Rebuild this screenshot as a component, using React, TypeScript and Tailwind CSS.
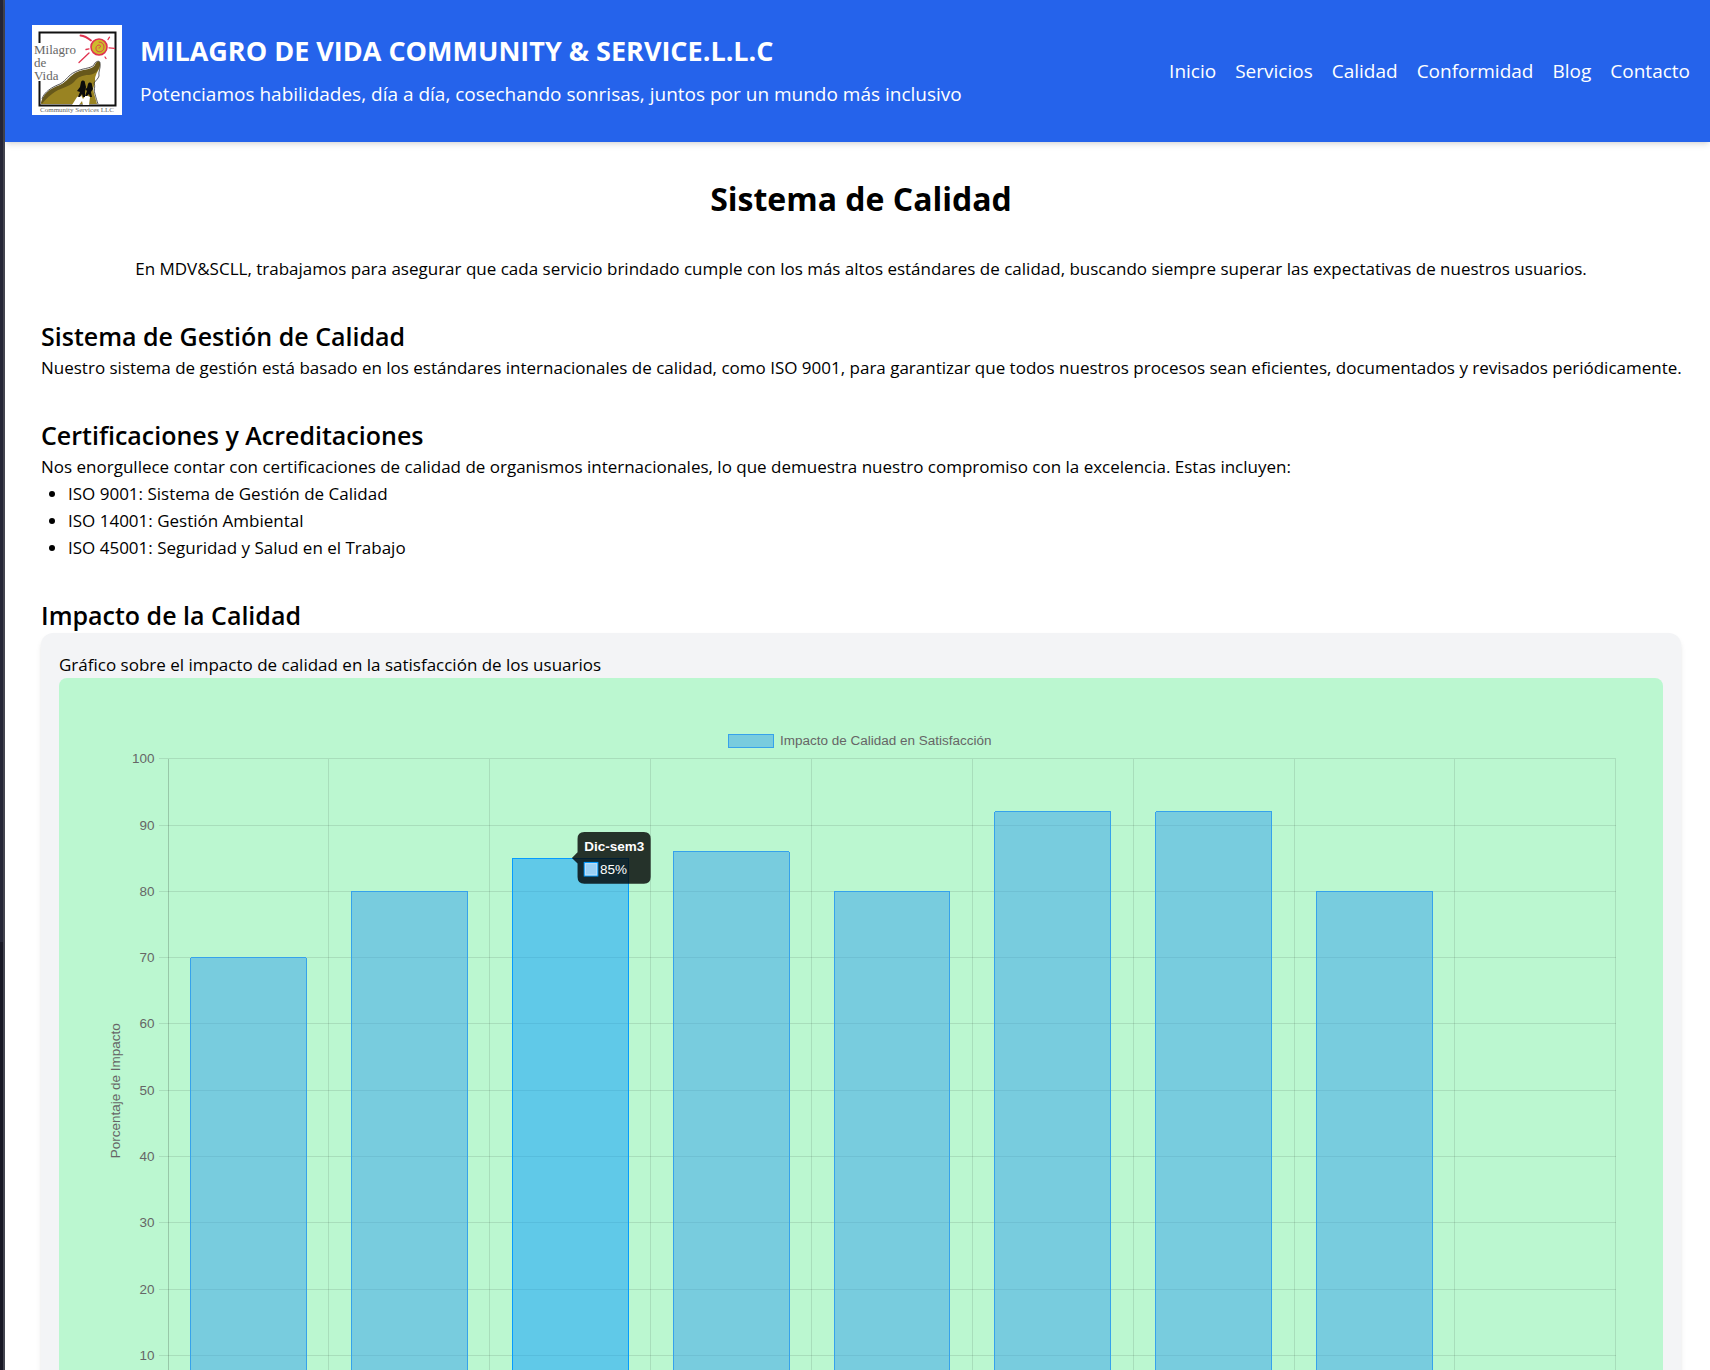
const NAV = ["Inicio", "Servicios", "Calidad", "Conformidad", "Blog", "Contacto"];

const VALUES = [70, 80, 85, 86, 80, 92, 92, 80, 0];
const TICKS = [10, 20, 30, 40, 50, 60, 70, 80, 90, 100];
const ACTIVE = 2;

const LEFT = 97;
const TOP = 72;
const BOTTOM = 661;
const STEP_X = 143;
const RIGHT = LEFT + STEP_X * VALUES.length;
const BAR = 103;

const yOf = (value: number) => BOTTOM - (value / 100) * (BOTTOM - TOP);

function Logo() {
  return (
    <svg viewBox="0 0 90 90" className="size-[90px] shrink-0 bg-white" role="img" aria-label="Milagro de Vida">
      <path d="M7.5 18V7.500H83.500V80.500H7.500V56" fill="none" stroke="#111" strokeWidth="2" />
      <path
        d="M9 79C11 70 18 64 29 60C36 57 38 52 45 48C52 45 60 46 63 41C64 37 67 35 68 38C69 43 65 46 64 50C62 54 64 57 62 61C60 65 63 70 65 79Z"
        fill="#998322"
      />
      <path
        d="M9 78C11 69 17 64 28 60C36 56 37 51 45 47C52 44 60 45 63 40C64 36 68 35 68 39C67 45 64 49 57 50C50 50 46 52 42 57C37 62 27 63 20 69C15 73 12 76 10 79Z"
        fill="#67581b"
      />
      <path
        d="M10 74C12 67 20 62 28 59C35 55 36 50 43 47C50 43 58 44 62 40C63 36 68 35 68 38C69 43 66 47 67 51C66 54 64 55 62 58C64 62 61 65 63 69C64 73 65 76 66 79"
        fill="none"
        stroke="#333"
        strokeWidth="0.8"
      />
      <path d="M45 72L49 70L51 74L54 70L58 72L57 80H51L50 76L47 80H40Z" fill="#fff" />
      <path
        d="M49 57C50 55 53 55 53 58L54 62L53 67L53 72L51 72L50 69L48 72H46L48 67L45 66L48 62Z"
        fill="#0b0b0b"
      />
      <path
        d="M56 59C57 57 60 57 60 60L61 64L59 67L60 72L58 72L57 69L55 71L53 71L55 66L53 64L55 63Z"
        fill="#0b0b0b"
      />
      <g stroke="#e0324f" fill="none" strokeLinecap="round">
        <path d="M57 28L47 37.500M73 32L74 33.500M77 22.800L82.500 23.400M76 14.500L77.500 12.200M54 24.500L57 23.800" strokeWidth="1.300" />
        <path d="M48.500 10.500C53 11 56 13 59 15.500" strokeWidth="1.800" />
        <circle cx="67" cy="22" r="8" fill="#cdbb2c" strokeWidth="1.600" />
        <path d="M67 23C69 23 69 20 67 20C64 20 63 24 65 26C68 28 72 26 72 22C72 19 70 17 67 17" strokeWidth="0.900" />
      </g>
      <g fill="#666" className="font-['Liberation_Serif',serif]">
        <text x="2" y="29" fontSize="13">Milagro</text>
        <text x="2" y="42" fontSize="13">de</text>
        <text x="2" y="55" fontSize="13">Vida</text>
        <text x="45" y="87" fontSize="7" textAnchor="middle">Community Services LLC</text>
      </g>
    </svg>
  );
}

function ImpactChart() {
  return (
    <svg
      viewBox="0 0 1426 713"
      className="block w-full font-['Liberation_Sans',Arial,sans-serif] text-[12px]"
      role="img"
      aria-label="Impacto de Calidad en Satisfacción"
    >
      <g stroke="#000" strokeOpacity="0.1" shapeRendering="crispEdges">
        {[0, ...TICKS].map((t) => (
          <line key={t} x1={LEFT - 8} x2={RIGHT} y1={yOf(t)} y2={yOf(t)} vectorEffect="non-scaling-stroke" />
        ))}
        {[...VALUES, 0].map((_, i) => (
          <line
            key={i}
            x1={LEFT + i * STEP_X}
            x2={LEFT + i * STEP_X}
            y1={TOP}
            y2={BOTTOM + 8}
            vectorEffect="non-scaling-stroke"
          />
        ))}
        <line x1={LEFT} x2={LEFT} y1={TOP} y2={BOTTOM} vectorEffect="non-scaling-stroke" />
      </g>

      <g shapeRendering="crispEdges">
        {VALUES.map((value, i) => {
          if (value === 0) return null;
          const x = LEFT + (i + 0.5) * STEP_X - BAR / 2;
          const y = yOf(value);
          const color = i === ACTIVE ? "#059bff" : "#36a2eb";
          return (
            <g key={i}>
              <rect x={x} y={y} width={BAR} height={BOTTOM - y} fill={color} fillOpacity="0.5" />
              <path
                d={`M${x} ${BOTTOM}V${y}H${x + BAR}V${BOTTOM}`}
                fill="none"
                stroke={color}
                vectorEffect="non-scaling-stroke"
              />
            </g>
          );
        })}
        <rect
          x="595"
          y="50"
          width="40"
          height="12"
          fill="#36a2eb"
          fillOpacity="0.5"
          stroke="#36a2eb"
          vectorEffect="non-scaling-stroke"
        />
      </g>

      <g fill="#666">
        <text x="641" y="60">
          Impacto de Calidad en Satisfacción
        </text>
        {TICKS.map((t) => (
          <text key={t} x={LEFT - 12} y={yOf(t) + 4} textAnchor="end">
            {t}
          </text>
        ))}
        <text transform="translate(54 367) rotate(-90)" textAnchor="middle">
          Porcentaje de Impacto
        </text>
      </g>

      <path
        d="M467 137H520Q526 137 526 143V177Q526 183 520 183H467Q461 183 461 177V165L456 160L461 155V143Q461 137 467 137Z"
        fill="#000"
        fillOpacity="0.8"
      />
      <text x="467" y="154" fill="#fff" className="font-bold">
        Dic-sem3
      </text>
      <rect x="467" y="164" width="12" height="12" fill="#9bd0f5" stroke="#059bff" />
      <rect x="468" y="165" width="10" height="10" fill="#9bd0f5" stroke="#b9defa" />
      <text x="481" y="174" fill="#fff">
        {`${VALUES[ACTIVE]}%`}
      </text>
    </svg>
  );
}

export default function App() {
  return (
    <div className="flex h-screen overflow-hidden bg-white font-['Open_Sans','Segoe_UI',sans-serif] text-[17px] leading-[27px] text-black">
      <div className="flex w-[5px] shrink-0 flex-col border-r-2 border-[#43444f]">
        <div className="h-[942px] bg-[#252637]" />
        <div className="grow bg-[#181825]" />
      </div>

      <div className="min-w-0 grow">
        <header className="flex items-center justify-between bg-[#2563eb] pt-[25px] pr-5 pb-[27px] pl-[27px] text-[19px] leading-7 text-white shadow-md">
          <div className="flex items-center gap-[18px]">
            <Logo />
            <div>
              <p className="text-[27px] leading-9 font-bold">MILAGRO DE VIDA COMMUNITY &amp; SERVICE.L.L.C</p>
              <p className="mt-[11px]">
                Potenciamos habilidades, día a día, cosechando sonrisas, juntos por un mundo más inclusivo
              </p>
            </div>
          </div>
          <nav className="pt-0.5">
            <ul className="flex gap-[19px]">
              {NAV.map((item) => (
                <li key={item}>
                  <a href={`#${item.toLowerCase()}`} className="hover:underline">
                    {item}
                  </a>
                </li>
              ))}
            </ul>
          </nav>
        </header>

        <main className="flex flex-col gap-9 pt-9 pr-[29px] pb-9 pl-9">
          <h1 className="text-center text-[32px] leading-[41px] font-bold">Sistema de Calidad</h1>
          <p className="text-center">
            En MDV&amp;SCLL, trabajamos para asegurar que cada servicio brindado cumple con los más altos estándares de
            calidad, buscando siempre superar las expectativas de nuestros usuarios.
          </p>

          <section>
            <h2 className="text-[25px] leading-9 font-semibold">Sistema de Gestión de Calidad</h2>
            <p className="xl:whitespace-nowrap">
              Nuestro sistema de gestión está basado en los estándares internacionales de calidad, como ISO 9001, para
              garantizar que todos nuestros procesos sean eficientes, documentados y revisados periódicamente.
            </p>
          </section>

          <section>
            <h2 className="text-[25px] leading-9 font-semibold">Certificaciones y Acreditaciones</h2>
            <p>
              Nos enorgullece contar con certificaciones de calidad de organismos internacionales, lo que demuestra
              nuestro compromiso con la excelencia. Estas incluyen:
            </p>
            <ul className="list-disc pl-[27px]">
              <li>ISO 9001: Sistema de Gestión de Calidad</li>
              <li>ISO 14001: Gestión Ambiental</li>
              <li>ISO 45001: Seguridad y Salud en el Trabajo</li>
            </ul>
          </section>

          <section>
            <h2 className="text-[25px] leading-9 font-semibold">Impacto de la Calidad</h2>
            <div className="rounded-xl bg-gray-100 p-[18px] shadow-md">
              <p>Gráfico sobre el impacto de calidad en la satisfacción de los usuarios</p>
              <div className="rounded-lg bg-[#bbf7d0]">
                <ImpactChart />
              </div>
            </div>
          </section>
        </main>
      </div>
    </div>
  );
}
